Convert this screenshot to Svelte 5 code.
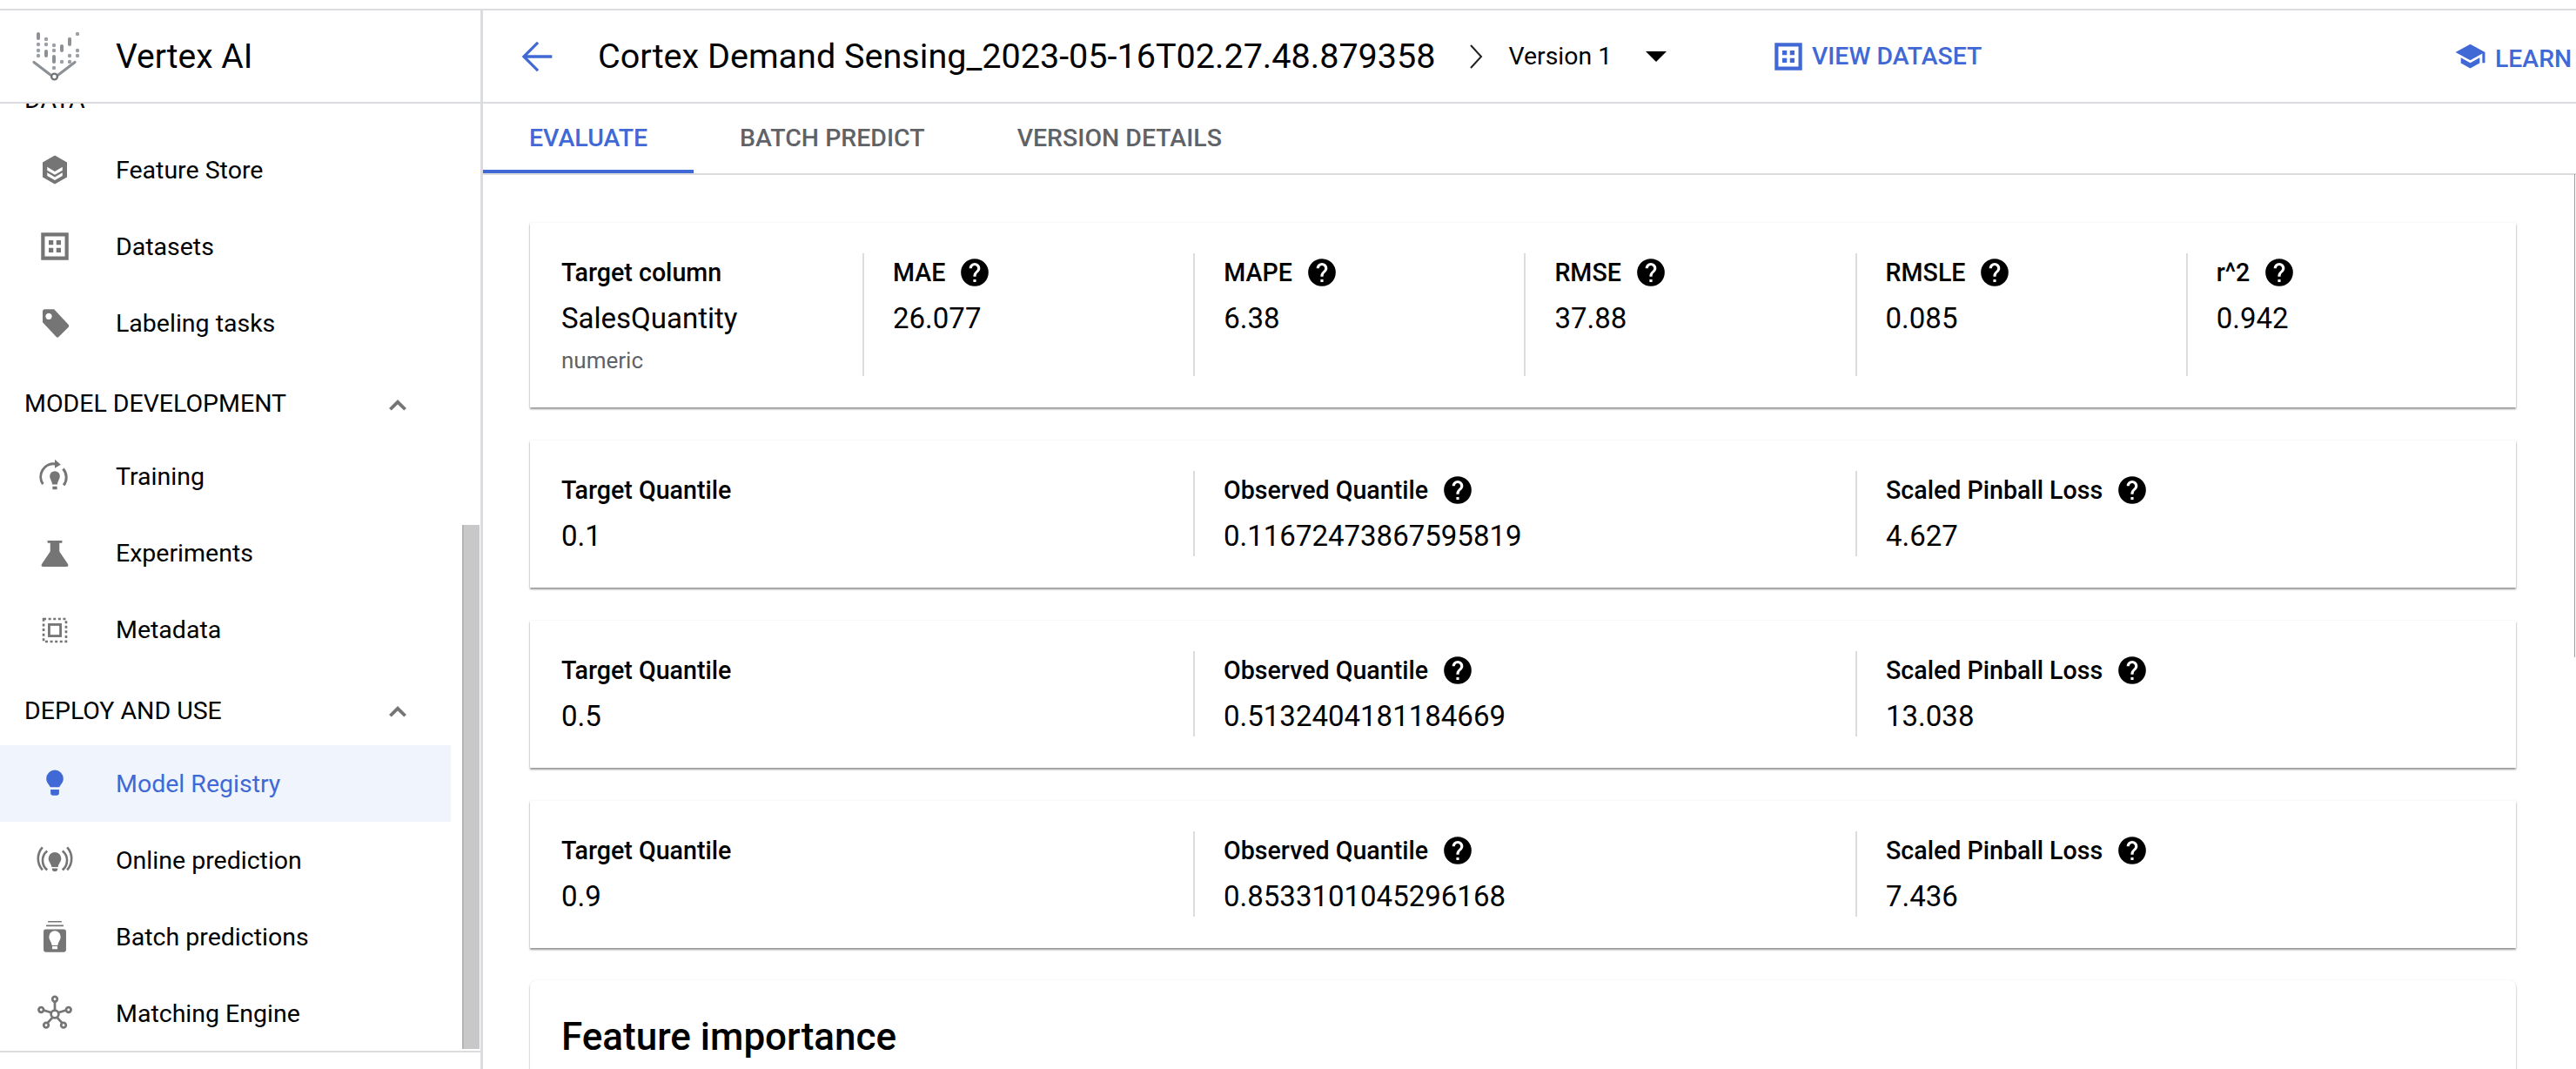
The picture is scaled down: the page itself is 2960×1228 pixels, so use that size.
<script lang="ts">
  // Vertex AI model evaluation page: side nav, title bar, tabs and metric cards.
  type Metric = { label: string; value: string; sub?: string; help?: boolean };

  const summary: Metric[] = [
    { label: "Target column", value: "SalesQuantity", sub: "numeric" },
    { label: "MAE", value: "26.077", help: true },
    { label: "MAPE", value: "6.38", help: true },
    { label: "RMSE", value: "37.88", help: true },
    { label: "RMSLE", value: "0.085", help: true },
    { label: "r^2", value: "0.942", help: true },
  ];

  const quantiles = [
    { target: "0.1", observed: "0.11672473867595819", loss: "4.627" },
    { target: "0.5", observed: "0.5132404181184669", loss: "13.038" },
    { target: "0.9", observed: "0.8533101045296168", loss: "7.436" },
  ];

  const quantileRows: Metric[][] = quantiles.map((q) => [
    { label: "Target Quantile", value: q.target },
    { label: "Observed Quantile", value: q.observed, help: true },
    { label: "Scaled Pinball Loss", value: q.loss, help: true },
  ]);

  const logoDots = [
    [53, 45], [53, 51], [71, 71], [62, 52], [62, 58], [62, 78],
    [44, 51], [44, 58], [44, 64], [80, 45], [80, 64], [80, 71],
    [89, 39], [89, 58], [89, 64],
  ];
  const logoBars = [
    [44, 37, 9], [53, 57, 9], [62, 63, 10], [71, 51, 9], [80, 44, 9],
  ];

  const icons: Record<string, string> = {
    store:
      "M12 2.6 20 7.1V16.9L12 21.4 4 16.9V7.1ZM7 10.2V12.4L12 15.3 17 12.4V10.2L12 13.1ZM7 13.9V16L12 18.9 17 16V13.9L12 16.8Z",
    data: "M3 3H21V21H3ZM5.4 5.4V18.6H18.6V5.4ZM8 8H11V11H8ZM13 8H16V11H13ZM8 13H11V16H8ZM13 13H16V16H13Z",
    tag: "M4 4.5Q4 3 5.5 3H11.5L21 13.2Q21.6 14 21 14.7L14.5 21.2Q13.7 21.8 13 21.2L4 11.5ZM8 5.5A2.1 2.1 0 1 0 8.01 5.5Z",
    flask: "M7.2 3.4H16.8V5H15V10.6L20.4 18.6Q21.6 20.6 19.4 20.6H4.6Q2.4 20.6 3.6 18.6L9 10.6V5H7.2Z",
    bulb: "M12 3.2A5.6 5.6 0 0 1 17.6 8.8C17.6 11.4 15.8 12.5 15 14.4H9C8.2 12.5 6.4 11.4 6.4 8.8A5.6 5.6 0 0 1 12 3.2ZM9.2 16H14.8V18.4Q14.8 19.8 13.4 19.8H10.6Q9.2 19.8 9.2 18.4Z",
  };
</script>

{#snippet navRow(label: string, active: boolean = false)}
  <div class="nav-row" class:active>
    <span class="nav-icon">
      {#if label === "Feature Store"}
        <svg viewBox="0 0 24 24"><path fill-rule="evenodd" d={icons.store} /></svg>
      {:else if label === "Datasets"}
        <svg viewBox="0 0 24 24"><path fill-rule="evenodd" d={icons.data} /></svg>
      {:else if label === "Labeling tasks"}
        <svg viewBox="0 0 24 24"><path fill-rule="evenodd" d={icons.tag} /></svg>
      {:else if label === "Training"}
        <svg viewBox="0 0 24 24">
          <path d="M12 8.1A3.3 3.3 0 0 1 15.3 11.4C15.3 13.4 14 14.1 13.7 16.8H10.3C10 14.1 8.7 13.4 8.7 11.4A3.3 3.3 0 0 1 12 8.1ZM10.5 18.2H13.5V20.2H10.5Z" />
          <path d="M4.2 16.6A8.5 8.5 0 0 1 12.5 3.4M17.4 6.6A8.5 8.5 0 0 1 17.8 17.4" fill="none" stroke="currentColor" stroke-width="1.7" />
          <path d="M12 0.4 15.9 3.8 12 6.2Z" />
        </svg>
      {:else if label === "Experiments"}
        <svg viewBox="0 0 24 24"><path d={icons.flask} /></svg>
      {:else if label === "Metadata"}
        <svg viewBox="0 0 24 24">
          <rect x="4.6" y="4.6" width="14.8" height="14.8" fill="none" stroke="currentColor" stroke-width="1.5" stroke-dasharray="1.7 1.5" />
          <rect x="8.25" y="8.25" width="7.5" height="7.5" fill="none" stroke="currentColor" stroke-width="1.6" />
        </svg>
      {:else if label === "Model Registry"}
        <svg viewBox="0 0 24 24"><path d={icons.bulb} /></svg>
      {:else if label === "Online prediction"}
        <svg viewBox="0 0 24 24">
          <path d="M12 6.8A4.2 4.2 0 0 1 16.2 11C16.2 13 14.4 14.2 14.1 16.6H9.9C9.6 14.2 7.8 13 7.8 11A4.2 4.2 0 0 1 12 6.8ZM10.2 17.4H13.8V18.2Q13.8 19.4 12.6 19.4H11.4Q10.2 19.4 10.2 18.2Z" />
          <path d="M7 6A8 8 0 0 0 7 18.5M17 6A8 8 0 0 1 17 18.5M3.9 3.6A11.1 11.1 0 0 0 3.9 18.5M20.1 3.6A11.1 11.1 0 0 1 20.1 18.5" fill="none" stroke="currentColor" stroke-width="1.5" />
        </svg>
      {:else if label === "Batch predictions"}
        <svg viewBox="0 0 24 24">
          <path fill-rule="evenodd" d="M6 7.2H18Q19.4 7.2 19.4 8.6V20.7Q19.4 22.1 18 22.1H6Q4.6 22.1 4.6 20.7V8.6Q4.6 7.2 6 7.2ZM12 8.2A3.8 3.8 0 0 0 8.2 12C8.2 14.2 9.7 15.2 10.1 17.7H13.9C14.3 15.2 15.8 14.2 15.8 12A3.8 3.8 0 0 0 12 8.2ZM10.3 18.3V20.2H13.7V18.3Z" />
          <path d="M7.5 1.7H16.5V2.6H7.5ZM6.3 4.3H17.7V5.3H6.3Z" />
        </svg>
      {:else}
        <svg viewBox="0 0 24 24">
          <g fill="none" stroke="currentColor" stroke-width="1.55">
            <path d="M12 10V4.4M14.2 11.6 19.4 10M9.8 11.6 4.6 10M13.4 14.6 16.8 18.4M10.6 14.6 7.2 18.4" />
            <circle cx="12" cy="12.6" r="2.5" />
            <circle cx="12" cy="2.7" r="1.6" />
            <circle cx="3" cy="9.7" r="1.6" />
            <circle cx="21" cy="9.7" r="1.6" />
            <circle cx="6.3" cy="19.8" r="1.6" />
            <circle cx="17.7" cy="19.8" r="1.6" />
          </g>
        </svg>
      {/if}
    </span>
    <span>{label}</span>
  </div>
{/snippet}

{#snippet sectionHead(label: string)}
  <div class="section-head">
    <span>{label}</span>
    <svg viewBox="0 0 24 24" class="collapse"><path d="M12 8 20 16 17.8 18 12 12.4 6.2 18 4 16Z" /></svg>
  </div>
{/snippet}

{#snippet metricRow(items: Metric[], cls: string)}
  <section class="card {cls}">
    {#each items as m}
      <div class="metric">
        <div class="metric-label">
          <span>{m.label}</span>
          {#if m.help}
            <svg class="help" viewBox="0 0 24 24">
              <path fill-rule="evenodd" d="M12 2A10 10 0 1 0 12 22 10 10 0 0 0 12 2ZM13 19H11V17H13ZM15.1 11.3 14.2 12.2C13.5 12.9 13 13.5 13 15H11V14.5C11 13.4 11.5 12.4 12.2 11.7L13.4 10.4C13.8 10.1 14 9.6 14 9 14 7.9 13.1 7 12 7S10 7.9 10 9H8A4 4 0 0 1 16 9C16 9.9 15.6 10.7 15.1 11.3Z" />
            </svg>
          {/if}
        </div>
        <div class="metric-value">{m.value}</div>
        {#if m.sub}<div class="metric-sub">{m.sub}</div>{/if}
      </div>
    {/each}
  </section>
{/snippet}

<div class="page">
  <aside class="side">
    <div class="brand">
      <svg class="logo" viewBox="30 30 70 70">
        <g fill="#9aa0a6">
          {#each logoDots as [cx, cy]}
            <circle {cx} {cy} r="2.2" />
          {/each}
          {#each logoBars as [x, y, h]}
            <rect x={x - 2} {y} width="4" height={h} rx="2" fill="#8d9196" />
          {/each}
        </g>
        <path d="M39 71.5 58 86M86 71.5 67 86" fill="none" stroke="#8d9196" stroke-width="3.2" stroke-linecap="round" />
        <circle cx="62.5" cy="88" r="3.4" fill="none" stroke="#70757a" stroke-width="2.4" />
      </svg>
      <span class="brand-name">Vertex AI</span>
    </div>
    <div class="side-body">
      <nav class="nav">
        <div class="data-head">DATA</div>
        {@render navRow("Feature Store")}
        {@render navRow("Datasets")}
        {@render navRow("Labeling tasks")}
        {@render sectionHead("MODEL DEVELOPMENT")}
        {@render navRow("Training")}
        {@render navRow("Experiments")}
        {@render navRow("Metadata")}
        {@render sectionHead("DEPLOY AND USE")}
        {@render navRow("Model Registry", true)}
        {@render navRow("Online prediction")}
        {@render navRow("Batch predictions")}
        {@render navRow("Matching Engine")}
      </nav>
      <div class="scroll-thumb"></div>
    </div>
  </aside>

  <main class="main">
    <header class="title-bar">
      <svg class="back" viewBox="0 0 24 24"><path d="M20 11.2H6.9L13 5.1 12 4 4 12 12 20 13 18.9 6.9 12.8H20Z" /></svg>
      <h1>Cortex Demand Sensing_2023-05-16T02.27.48.879358</h1>
      <svg class="crumb" viewBox="0 0 20 28"><path d="M3 1 15 14 3 27" fill="none" stroke="currentColor" stroke-width="2" /></svg>
      <span class="version">Version 1</span>
      <span class="caret"></span>
      <span class="link view">
        <svg viewBox="0 0 24 24"><path fill-rule="evenodd" d="M3 3H21V21H3ZM5.4 5.4V18.6H18.6V5.4ZM8 8H11V11H8ZM13 8H16V11H13ZM8 13H11V16H8ZM13 13H16V16H13Z" /></svg>
        <span>VIEW DATASET</span>
      </span>
      <span class="link learn">
        <svg viewBox="0 0 24 24"><path d="M5 13.18V17.18L12 21 19 17.18V13.18L12 17ZM12 3 1 9 12 15 21 10.09V17H23V9Z" /></svg>
        <span class="learn-text">LEARN</span>
      </span>
    </header>

    <div class="tabs">
      <span class="tab on">EVALUATE</span>
      <span class="tab">BATCH PREDICT</span>
      <span class="tab">VERSION DETAILS</span>
    </div>

    <div class="content">
      {@render metricRow(summary, "six")}
      {#each quantileRows as row}
        {@render metricRow(row, "three")}
      {/each}
      <section class="card feature">
        <h2>Feature importance</h2>
      </section>
    </div>
    <div class="edge"></div>
  </main>
</div>

<style>
  :global(body) {
    margin: 0;
    background: #fff;
    font-family: Roboto, "Liberation Sans", sans-serif;
    color: #000;
  }
  .page {
    width: 2960px;
    height: 1228px;
    overflow: hidden;
    display: flex;
    box-sizing: border-box;
    padding-top: 10px;
    position: relative;
  }
  .side {
    width: 555px;
    flex: none;
    display: flex;
    flex-direction: column;
    box-sizing: border-box;
    border-top: 2px solid #dadce0;
    border-right: 3px solid #dadce0;
  }
  .brand {
    height: 107px;
    flex: none;
    box-sizing: border-box;
    border-bottom: 2px solid #dadce0;
    display: flex;
    align-items: center;
    padding-left: 30px;
  }
  .logo {
    width: 70px;
    height: 70px;
    flex: none;
    margin-right: 33px;
  }
  .brand-name {
    font-size: 39px;
  }
  .side-body {
    flex: none;
    position: relative;
    overflow: hidden;
    height: 1090px;
    box-sizing: border-box;
    border-bottom: 2px solid #dadce0;
  }
  .nav {
    width: 518px;
    margin-top: -32px;
  }
  .data-head {
    height: 64px;
    padding: 0 0 0 28px;
    font-size: 28.5px;
    line-height: 56px;
  }
  .nav-row {
    height: 88px;
    display: flex;
    align-items: center;
    font-size: 28.5px;
  }
  .nav-row.active {
    background: #eff4fd;
    color: #4169d6;
  }
  .nav-icon {
    width: 133px;
    height: 42px;
    flex: none;
    display: flex;
    justify-content: center;
    padding-right: 8px;
    box-sizing: border-box;
    color: #757575;
  }
  .nav-row.active .nav-icon {
    color: #4169d6;
  }
  .nav-icon svg {
    width: 42px;
    height: 42px;
    fill: currentColor;
  }
  .section-head {
    height: 80px;
    margin-top: 8.5px;
    display: flex;
    align-items: center;
    justify-content: space-between;
    padding: 0 46px 0 28px;
    font-size: 28.5px;
  }
  .collapse {
    width: 30px;
    height: 30px;
    fill: #757575;
  }
  .scroll-thumb {
    position: absolute;
    top: 484px;
    bottom: 2px;
    left: 531px;
    width: 20px;
    background: #c8c8c8;
    border-left: 2px solid #b4b4b4;
    box-sizing: border-box;
  }
  .main {
    flex: 1;
    min-width: 0;
    display: flex;
    flex-direction: column;
  }
  .title-bar {
    height: 109px;
    flex: none;
    box-sizing: border-box;
    border-top: 2px solid #dadce0;
    border-bottom: 2px solid #dadce0;
    display: flex;
    align-items: center;
    position: relative;
    padding-left: 36px;
  }
  .back {
    width: 52px;
    height: 52px;
    fill: #4169d6;
    flex: none;
    margin-right: 44px;
  }
  h1 {
    margin: 0;
    font-size: 39.55px;
    font-weight: 400;
    white-space: nowrap;
  }
  .crumb {
    width: 20px;
    height: 28px;
    flex: none;
    margin-left: 37px;
    color: #202124;
  }
  .version {
    font-size: 28.4px;
    margin-left: 27px;
  }
  .caret {
    width: 0;
    height: 0;
    margin-left: 39px;
    border-left: 12px solid transparent;
    border-right: 12px solid transparent;
    border-top: 12px solid #000;
  }
  .link {
    display: flex;
    align-items: center;
    font-size: 28.4px;
    font-weight: 500;
    color: #4169d6;
    white-space: nowrap;
    position: absolute;
    top: 0;
    bottom: 0;
  }
  .link svg {
    width: 42px;
    height: 42px;
    fill: #4169d6;
    flex: none;
    margin-right: 6px;
  }
  .view {
    left: 1479px;
  }
  .learn {
    left: 2265px;
  }
  .link.learn svg {
    width: 37px;
    height: 37px;
    margin-right: 10px;
  }
  .learn-text {
    margin-top: 5px;
  }
  .tabs {
    height: 82px;
    flex: none;
    box-sizing: border-box;
    border-bottom: 2px solid #dadce0;
    display: flex;
  }
  .tab {
    padding: 0 53px;
    font-size: 28.5px;
    font-weight: 500;
    color: #5f6368;
    line-height: 80px;
  }
  .tab.on {
    color: #4169d6;
    box-shadow: inset 0 -4px 0 #4169d6;
    height: 80px;
  }
  .content {
    flex: 1;
    min-height: 0;
    overflow: hidden;
    padding: 55px 20px 0 54px;
    display: flex;
    flex-direction: column;
    gap: 38px;
    width: 2282px;
    box-sizing: content-box;
  }
  .card {
    flex: none;
    background: #fff;
    box-shadow: 0 2px 2px rgba(60, 64, 67, 0.55), 0 0 2px rgba(60, 64, 67, 0.1);
    box-sizing: border-box;
    padding: 35px 36px 36px;
    display: grid;
  }
  .card.six {
    height: 212px;
    grid-template-columns: 346px repeat(4, 380.2px) 1fr;
  }
  .card.three {
    height: 169px;
    grid-template-columns: 726px 761px 1fr;
  }
  .metric {
    padding-left: 33px;
    border-left: 2px solid #dadce0;
    min-width: 0;
  }
  .metric:first-child {
    padding-left: 0;
    border-left: 0;
  }
  .metric-label {
    display: flex;
    align-items: center;
    font-size: 28.6px;
    font-weight: 500;
    height: 44px;
  }
  .help {
    width: 38px;
    height: 38px;
    margin-left: 15px;
    flex: none;
    fill: #000;
  }
  .metric-value {
    font-size: 33px;
    line-height: 40px;
    margin-top: 11px;
  }
  .metric-sub {
    font-size: 26px;
    line-height: 30px;
    margin-top: 13px;
    color: #5f6368;
  }
  .card.feature {
    height: 200px;
    margin-top: -1px;
    border-radius: 8px 8px 0 0;
    display: block;
    padding-top: 39px;
  }
  h2 {
    margin: 0;
    font-size: 44px;
    font-weight: 500;
  }
  /* thin scroll edge at the far right of the page */
  .edge {
    position: absolute;
    top: 200px;
    left: 2958px;
    width: 1px;
    height: 555px;
    background: #9e9e9e;
  }
</style>
